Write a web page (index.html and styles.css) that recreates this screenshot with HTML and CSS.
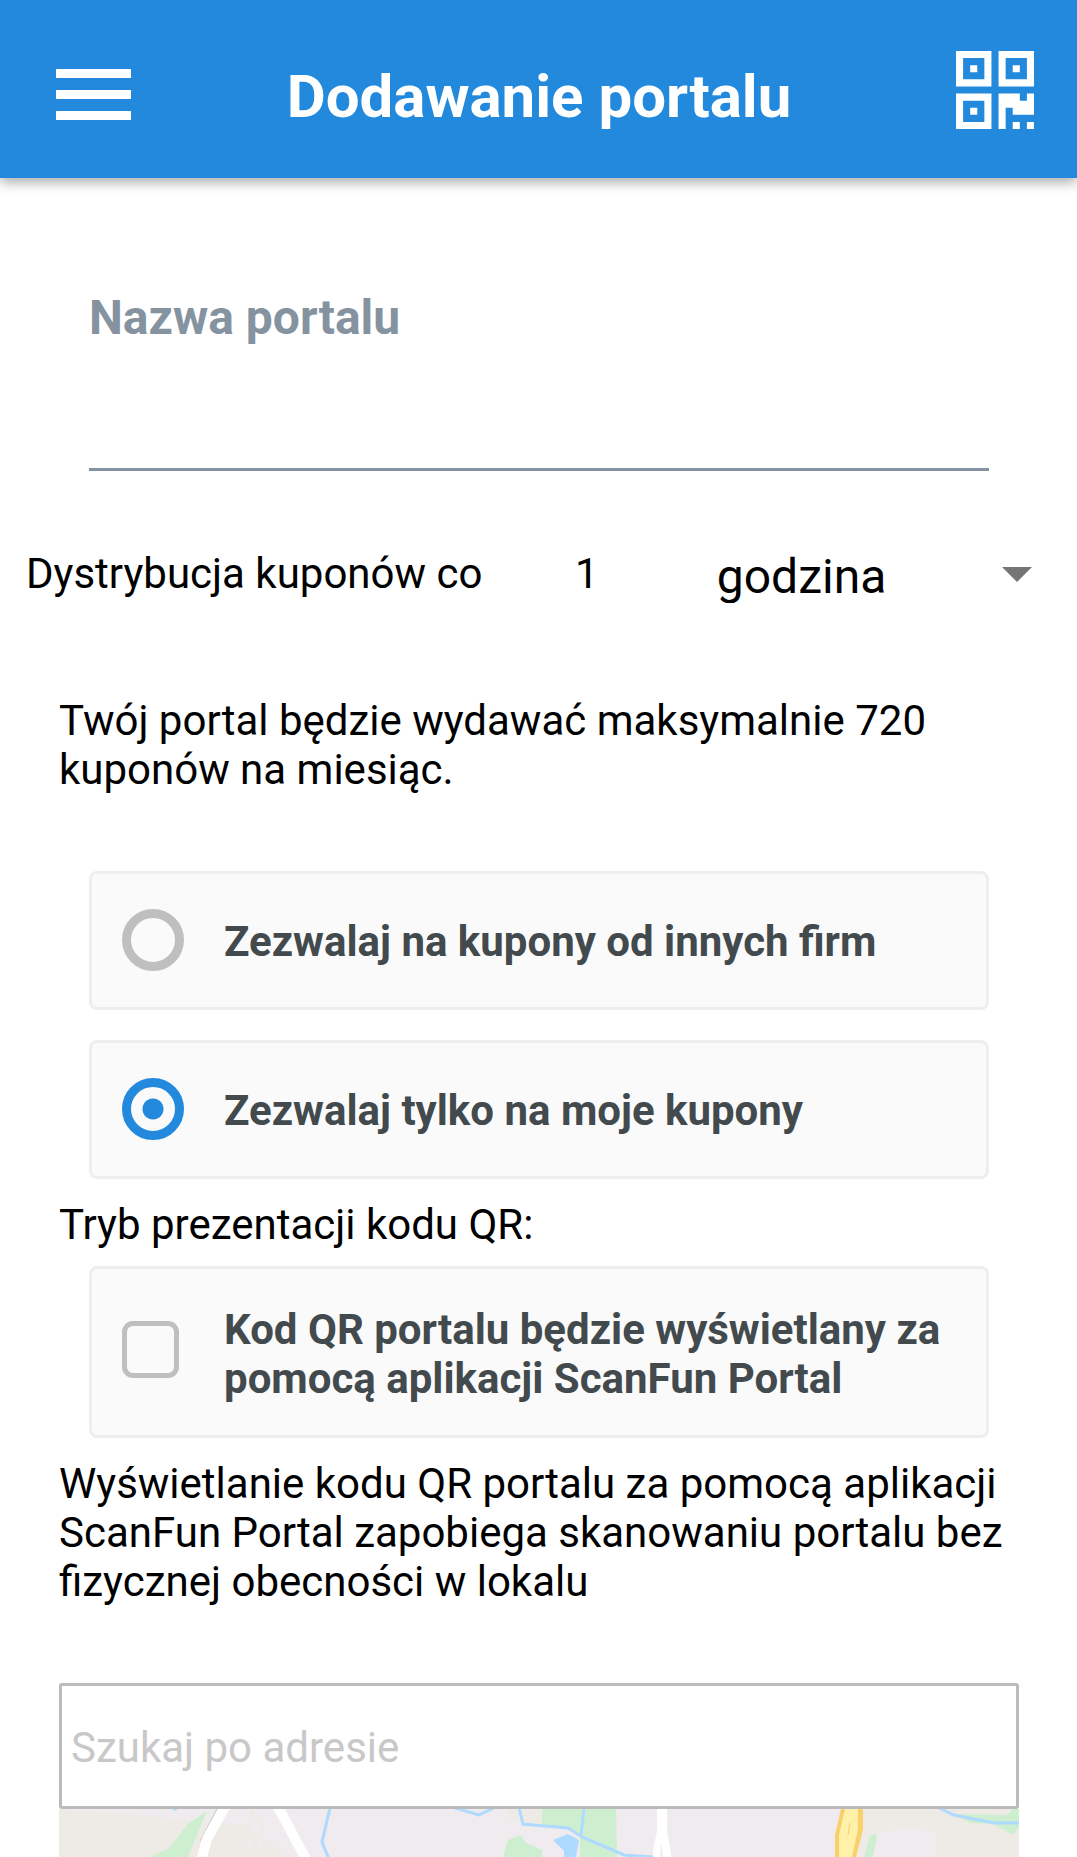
FILE: index.html
```html
<!DOCTYPE html>
<html lang="pl">
<head>
<meta charset="utf-8">
<meta name="viewport" content="width=device-width, initial-scale=1">
<title>Dodawanie portalu</title>
<link rel="stylesheet" href="styles.css">
</head>
<body>
<header class="topbar">
  <button class="icon-button menu-button" type="button" aria-label="Menu">
    <svg class="menu-icon" viewBox="0 0 75 51" aria-hidden="true"><path d="M0 0h75v9H0zM0 21h75v9H0zM0 42h75v9H0z"/></svg>
  </button>
  <h1 class="title">Dodawanie portalu</h1>
  <button class="icon-button" type="button" aria-label="Skanuj kod QR">
    <svg class="qr-icon" viewBox="0 0 11 11" aria-hidden="true"><path fill-rule="evenodd" d="M0 0h5v5H0zM1 1v3h3V1zM2 2h1v1H2zM6 0h5v5H6zM7 1v3h3V1zM8 2h1v1H8zM0 6h5v5H0zM1 7v3h3V7zM2 8h1v1H2zM6 6h3v1h1V6h1v3H8V8H7v3H6zM8 10h1v1H8zM10 10h1v1h-1z"/></svg>
  </button>
</header>
<main class="content">
  <form class="form">
    <div class="name-field">
      <label class="name-label" for="name">Nazwa portalu</label>
      <input class="name-input" id="name" type="text">
    </div>

    <div class="interval">
      <label for="amount">Dystrybucja kuponów co</label>
      <input class="amount" id="amount" type="text" inputmode="numeric" value="1">
      <div class="unit">
        <select class="unit-select" aria-label="Jednostka czasu">
          <option>godzina</option>
          <option>dzień</option>
        </select>
        <svg class="unit-arrow" viewBox="0 0 30 15" aria-hidden="true"><path d="M0 0h30L15 15z"/></svg>
      </div>
    </div>

    <p class="text summary">Twój portal będzie wydawać maksymalnie 720 kuponów na miesiąc.</p>

    <div class="options">
      <label class="option">
        <input class="radio" type="radio" name="coupons">
        <span>Zezwalaj na kupony od innych firm</span>
      </label>
      <label class="option">
        <input class="radio" type="radio" name="coupons" checked>
        <span>Zezwalaj tylko na moje kupony</span>
      </label>
    </div>

    <p class="text mode">Tryb prezentacji kodu QR:</p>
    <label class="option option-tall">
      <input class="checkbox" type="checkbox">
      <span>Kod QR portalu będzie wyświetlany za pomocą aplikacji ScanFun Portal</span>
    </label>
    <p class="text hint">Wyświetlanie kodu QR portalu za pomocą aplikacji ScanFun Portal zapobiega skanowaniu portalu bez fizycznej obecności w lokalu</p>

    <input class="search" type="text" placeholder="Szukaj po adresie" aria-label="Szukaj po adresie">
  </form>
  <div class="map">
    <svg class="map-drawing" viewBox="0 0 960 48" preserveAspectRatio="xMidYMin slice" aria-hidden="true">
      <path fill="#efebef" d="M0 0h960v48H0z"/>
      <path fill="#eeebe6" d="M0 0h190l4 10 12 8-6 14-2 10-6-2 4-16-6-8M0 0v48h228l-18-18-10 10h-12l2-8 10-8 4-12-12-12zM448 0h36v18l-36-8zM805 0h155v48h-82V23l-28-3-34 3-11 25h-17z"/>
      <path fill="#cdeecf" d="M148 2 129 48H91l19-9 19-24zM483 0h74l1 48h-37V28l-12-9-26-3zM444 48l5-17 12-5 6 8 16 7v7zM481 40l2 3v5h-2zM811 26l7-1-4 23h-9zM894 5l54 1 6-6h6v18l-6 8-20-11-23-1z"/>
      <path fill="#aedaff" d="m494 31 15-6 11 6-3 17h-12v-6zM113 0h6l-3 2z"/>
      <g fill="none" stroke="#aedaff" stroke-width="3">
        <path d="m271-1-8 34 7 17M396-1l24 7 15-7M460-1l4 16 45 4 14 9 42 18 29 2M525-1l-3 27M880-1l15 7 40 8h25"/>
      </g>
      <path fill="none" stroke="#c4cace" d="m158 0-17 32"/>
      <path fill="none" stroke="#fff" stroke-width="10" d="m167-4-19 34-6 22M218-4l30 56"/>
      <path fill="#fff" fill-rule="evenodd" d="M598 0h10v22l4 22v4h-18v-6l4-20zM602 34l-1 14h3z"/>
      <path fill="#f9d069" d="M782 0h22v20l-7 28h-21V26z"/>
      <path fill="#fff1a9" d="M786 0h13v20l-6 28h-13V26z"/>
      <path fill="none" stroke="#f9d069" d="m791 14-2 12"/>
    </svg>
  </div>
</main>
</body>
</html>
```
FILE: styles.css
```css
* {
  box-sizing: border-box;
}

body {
  margin: 0;
  min-height: 100vh;
  display: flex;
  flex-direction: column;
  background: #fff;
  color: #000;
  font: 42px/49px Roboto, sans-serif;
}

input,
select {
  appearance: none;
  border: 0;
  border-radius: 0;
  margin: 0;
  padding: 0;
  background: transparent;
  color: inherit;
  font: inherit;
}

.topbar {
  display: flex;
  align-items: center;
  justify-content: space-between;
  padding: 51px 43px 49px 56px;
  background: #2289dd;
  color: #fff;
  box-shadow: 0 4px 12px rgba(0, 0, 0, 0.35);
}

.title {
  flex: 1;
  margin: 0;
  padding: 14px 9px 0 0;
  font-size: 60px;
  line-height: 64px;
  font-weight: 700;
  text-align: center;
}

.icon-button {
  display: flex;
  padding: 0;
  border: 0;
  background: none;
  color: inherit;
}

.icon-button svg {
  fill: currentColor;
}

.menu-button {
  padding-top: 8px;
}

.menu-icon {
  width: 75px;
  height: 51px;
}

.qr-icon {
  width: 78px;
  height: 78px;
}

.content {
  flex: 1;
  display: flex;
  flex-direction: column;
  padding: 112px 58px 0 59px;
}

.form {
  display: flex;
  flex-direction: column;
}

.name-field {
  display: flex;
  flex-direction: column;
  margin: 0 30px;
}

.name-label {
  color: #8593a0;
  font-size: 48px;
  line-height: 56px;
  font-weight: 700;
}

.name-input {
  height: 125px;
  padding-top: 50px;
  border-bottom: 3px solid #8593a0;
}

.interval {
  display: grid;
  grid-template-columns: 9fr 2fr 7fr;
  align-items: start;
  margin: 78px -13px 0 -33px;
}

.amount {
  width: 100%;
  height: 49px;
  padding-left: 4px;
  text-align: center;
}

.unit {
  display: grid;
  align-items: center;
  padding-left: 76px;
}

.unit-select,
.unit-arrow {
  grid-area: 1 / 1;
}

.unit-select {
  width: 100%;
  height: 54px;
  font-size: 48px;
  line-height: 56px;
}

.unit-arrow {
  justify-self: end;
  width: 30px;
  height: 15px;
  margin-bottom: 4px;
  fill: #757575;
  pointer-events: none;
}

.text {
  margin: 0;
}

.summary {
  margin: 93px 0 77px;
}

.options {
  display: grid;
  gap: 30px;
}

.option {
  display: grid;
  grid-template-columns: 62px 1fr;
  column-gap: 40px;
  align-items: center;
  margin: 0 30px;
  padding: 43px 30px 41px;
  border: 3px solid #eee;
  border-radius: 8px;
  background: #fafafa;
  color: #434a4e;
  font-weight: 700;
}

.option-tall {
  padding: 36px 30px 32px;
}

.radio {
  width: 62px;
  height: 62px;
  margin: -8px 0 -5px;
  border: 9px solid #bfbfbf;
  border-radius: 50%;
}

.radio:checked {
  border-color: #2289dd;
  background: radial-gradient(circle, #2289dd 10px, transparent 11px);
}

.options .option {
  height: 139px;
}

.checkbox {
  width: 57px;
  height: 57px;
  margin-bottom: 10px;
  border: 5px solid #bfbfbf;
  border-radius: 11px;
}

.mode {
  margin: 21px 0 17px;
}

.hint {
  margin: 21px 0 77px;
}

.search {
  height: 126px;
  padding: 3px 10px 0 9px;
  border: 3px solid #bbb;
  border-radius: 3px;
}

.search::placeholder {
  color: #c8c8c8;
  opacity: 1;
}

.map {
  flex: 1;
  display: flex;
  min-height: 48px;
}

.map-drawing {
  width: 100%;
  height: 48px;
  flex: 1;
}
```
